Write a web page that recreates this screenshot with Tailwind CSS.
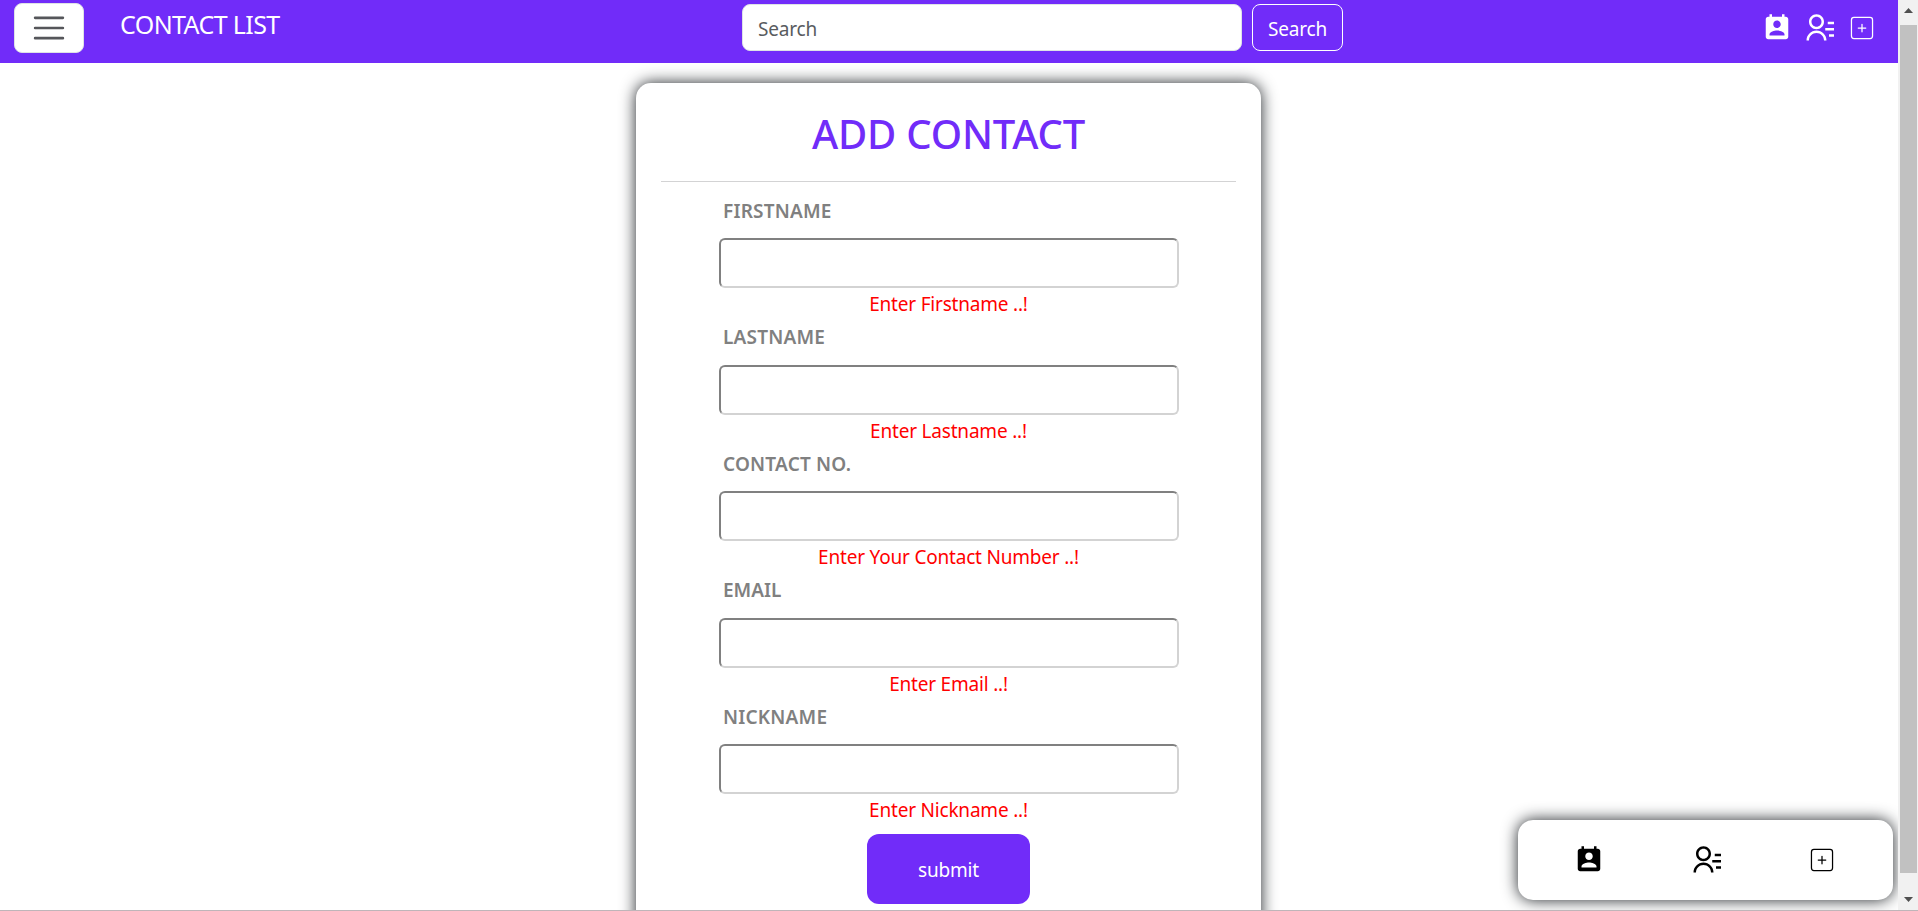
<!DOCTYPE html>
<html lang="en">
<head>
<meta charset="utf-8">
<title>Contact List</title>
<script src="https://cdn.jsdelivr.net/npm/@tailwindcss/browser@4"></script>
</head>
<body class="h-[911px] overflow-hidden bg-white font-['Noto_Sans',sans-serif]">
<svg class="hidden">
  <symbol id="calendar" viewBox="0 0 24 24"><path fill="currentColor" d="M19 3h-1V1h-2v2H8V1H6v2H5c-1.11 0-2 .9-2 2v14c0 1.1.89 2 2 2h14c1.1 0 2-.9 2-2V5c0-1.1-.9-2-2-2zm-7 3c1.66 0 3 1.34 3 3s-1.34 3-3 3-3-1.34-3-3 1.34-3 3-3zm6 12H6v-1c0-2 4-3.1 6-3.1s6 1.1 6 3.1v1z"/></symbol>
  <symbol id="contacts" viewBox="0 0 24 24"><path fill="currentColor" d="M19 7H24V9H19V7ZM17 12H24V14H17V12ZM20 17H24V19H20V17ZM2 22C2 17.5817 5.58172 14 10 14C14.4183 14 18 17.5817 18 22H16C16 18.6863 13.3137 16 10 16C6.68629 16 4 18.6863 4 22H2ZM10 13C6.685 13 4 10.315 4 7C4 3.685 6.685 1 10 1C13.315 1 16 3.685 16 7C16 10.315 13.315 13 10 13ZM10 11C12.21 11 14 9.21 14 7C14 4.79 12.21 3 10 3C7.79 3 6 4.79 6 7C6 9.21 7.79 11 10 11Z"/></symbol>
  <symbol id="plus" viewBox="0 0 24 24"><g fill="none" stroke="currentColor" stroke-linecap="round"><rect x="3.565" y="3.565" width="16.87" height="16.87" rx="2"/><path d="M12 9v6M9 12h6"/></g></symbol>
</svg>
<div class="flex h-[910px] overflow-hidden">
  <div class="relative flex w-[1898px] flex-col">
    <header class="flex h-[63px] shrink-0 items-start bg-[#712cf9] pl-[14px] text-white">
      <button class="mt-[3px] flex h-[50px] w-[70px] items-center justify-center rounded-lg border border-[#dee2e6] bg-white text-[#55565a]">
        <svg class="size-[38px]" viewBox="0 0 30 30"><path stroke="currentColor" stroke-linecap="round" stroke-width="2" d="M4 7h22M4 15h22M4 23h22"/></svg>
      </button>
      <span class="ml-[36px] mt-[6px] w-[622px] text-[25px] leading-9 tracking-[-0.6px]">CONTACT LIST</span>
      <div class="mt-1 flex h-[47px] w-[500px] items-center rounded-lg border border-[#dee2e6] bg-white pt-[3px] pl-[15px] text-[19px] tracking-[-0.2px] text-[#595c5f]">Search</div>
      <button class="ml-[10px] mt-1 h-[47px] w-[91px] rounded-lg border border-white pt-[3px] text-[19px] tracking-[-0.2px]">Search</button>
      <div class="ml-auto mr-[21px] mt-[13px] flex">
        <svg class="size-[30px]"><use href="#calendar"/></svg>
        <svg class="ml-[12px] size-[30px]"><use href="#contacts"/></svg>
        <svg class="ml-[13px] size-[30px]"><use href="#plus"/></svg>
      </div>
    </header>
    <main class="mt-5 ml-[636px] flex h-[900px] w-[625px] shrink-0 flex-col items-center rounded-[15px] bg-white shadow-[0_0_16px_#212529]">
      <h1 class="mt-[27px] h-[71px] text-[40px] leading-[48px] font-medium tracking-[-0.2px] text-[#712cf9]">ADD CONTACT</h1>
      <hr class="w-[575px] border-[#d3d3d4]">
      <form class="ml-px flex w-[460px] flex-col pt-[14px]">
        <div class="h-[126.5px]"><label class="block h-[42px] pl-1 text-[19px] leading-[30px] font-semibold tracking-[0.2px] text-[#808080]">FIRSTNAME</label><input class="block h-[50px] w-full rounded-[6px] border-2 border-t-[#808080] border-l-[#808080] border-r-[#d3d3d3] border-b-[#d3d3d3]"><p class="pt-[1px] pr-px text-center text-[19px] tracking-[-0.2px] leading-[30px] text-[#f00]">Enter Firstname ..!</p></div>
        <div class="h-[126.5px]"><label class="block h-[42px] pl-1 text-[19px] leading-[29px] font-semibold tracking-[0.2px] text-[#808080]">LASTNAME</label><input class="block h-[50px] w-full rounded-[6px] border-2 border-t-[#808080] border-l-[#808080] border-r-[#d3d3d3] border-b-[#d3d3d3]"><p class="pt-[1px] pr-px text-center text-[19px] tracking-[-0.2px] leading-[30px] text-[#f00]">Enter Lastname ..!</p></div>
        <div class="h-[126.5px]"><label class="block h-[42px] pl-1 text-[19px] leading-[30px] font-semibold tracking-[0.2px] text-[#808080]">CONTACT NO.</label><input class="block h-[50px] w-full rounded-[6px] border-2 border-t-[#808080] border-l-[#808080] border-r-[#d3d3d3] border-b-[#d3d3d3]"><p class="pt-[1px] pr-px text-center text-[19px] tracking-[-0.2px] leading-[30px] text-[#f00]">Enter Your Contact Number ..!</p></div>
        <div class="h-[126.5px]"><label class="block h-[42px] pl-1 text-[19px] leading-[29px] font-semibold text-[#808080]">EMAIL</label><input class="block h-[50px] w-full rounded-[6px] border-2 border-t-[#808080] border-l-[#808080] border-r-[#d3d3d3] border-b-[#d3d3d3]"><p class="pt-[1px] pr-px text-center text-[19px] tracking-[-0.2px] leading-[30px] text-[#f00]">Enter Email ..!</p></div>
        <div class="h-[126.5px]"><label class="block h-[42px] pl-1 text-[19px] leading-[30px] font-semibold tracking-[0.2px] text-[#808080]">NICKNAME</label><input class="block h-[50px] w-full rounded-[6px] border-2 border-t-[#808080] border-l-[#808080] border-r-[#d3d3d3] border-b-[#d3d3d3]"><p class="pt-[1px] pr-px text-center text-[19px] tracking-[-0.2px] leading-[30px] text-[#f00]">Enter Nickname ..!</p></div>
        <button type="button" class="mt-[5.500px] ml-[148px] h-[70px] w-[163px] rounded-[12px] bg-[#712cf9] pt-[3px] text-[19px] tracking-[-0.2px] text-white">submit</button>
      </form>
    </main>
    <nav class="absolute top-[820px] left-[1518px] flex h-[80px] w-[375px] items-center rounded-[15px] bg-white pl-[56px] text-black shadow-[0_0_16px_#212529]">
      <svg class="size-[30px]"><use href="#calendar"/></svg>
      <svg class="ml-[87px] size-[30px]"><use href="#contacts"/></svg>
      <svg class="ml-[86px] size-[30px]"><use href="#plus"/></svg>
    </nav>
  </div>
  <div class="relative z-10 flex w-5 flex-col items-center bg-[#f1f1f1]">
    <svg class="h-[25px] w-5 shrink-0"><path fill="#505050" d="M6 13h9L10.500 8z"/></svg>
    <div class="ml-px h-[848px] w-[17px] bg-[#c1c1c1]"></div>
    <svg class="h-[37px] w-5 shrink-0"><path fill="#505050" d="M6 24h9l-4.500 5z"/></svg>
  </div>
</div>
<div class="h-px bg-[#bfb5b9]"></div>
</body>
</html>
